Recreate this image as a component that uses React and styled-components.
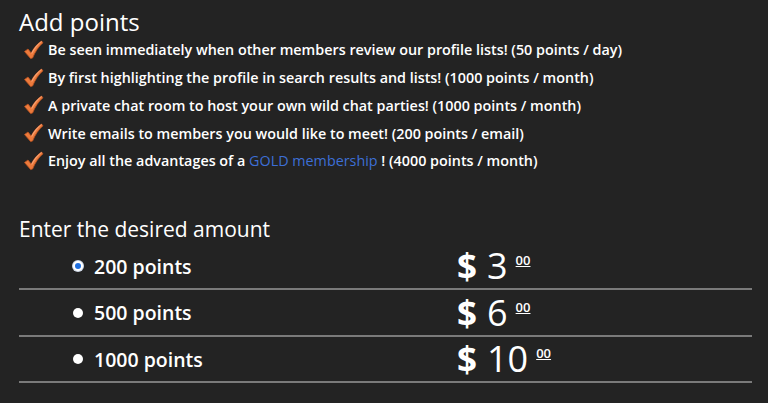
import * as React from "react";
import styled, { createGlobalStyle } from "styled-components";

const GlobalStyle = createGlobalStyle`
	html, body {
		margin: 0;
		padding: 0;
		background: #232323;
	}
	body {
		font-family: "Open Sans", "DejaVu Sans", sans-serif;
		color: #fff;
	}
`

const StyledWrapper = styled.section`
	width: 768px;
	height: 403px;
	padding: 8px 16px 0 19px;
	box-sizing: border-box;
	overflow: hidden;
`
const StyledTitle = styled.h1`
	margin: 0;
	font-size: 24px;
	font-weight: 400;
	line-height: 28px;
`
const StyledList = styled.ul`
	list-style: none;
	margin: 0;
	padding: 0 0 0 4px;
`
const StyledItem = styled.li`
	display: flex;
	align-items: center;
	gap: 4px;
	height: 27.75px;
	font-size: 14.35px;
	font-weight: 600;
`
const StyledLink = styled.a`
	color: #3d6fd6;
	font-weight: 400;
	text-decoration: none;
`
const StyledSubtitle = styled.h2`
	margin: 39px 0 0;
	font-size: 21px;
	font-weight: 400;
	line-height: 30px;
`
const StyledRow = styled.label`
	display: grid;
	grid-template-columns: 384px 1fr;
	align-items: center;
	height: 46.5px;
	padding-left: 54px;
	border-bottom: 2px solid #7a7a7a;
	box-sizing: border-box;
	width: 733px;
`
const StyledOption = styled.span`
	display: flex;
	align-items: center;
	gap: 11px;
	font-size: 19.5px;
	font-weight: 600;
`
const StyledRadio = styled.span`
	width: 10px;
	height: 10px;
	border-radius: 50%;
	box-sizing: border-box;
	background: ${p => (p.checked ? "#1f6fe0" : "#fff")};
	border: ${p => (p.checked ? "2px solid #fff" : "none")};
	box-shadow: ${p => (p.checked ? "0 0 0 1px #cfd8e6" : "none")};
`
const StyledPrice = styled.span`
	display: flex;
	align-items: flex-start;
	gap: 10px;
	font-size: 36px;
	font-weight: 400;
	line-height: 42px;
`
const StyledDollar = styled.span`
	font-weight: 700;
	font-size: 35px;
`
const StyledCents = styled.span`
	font-size: 13px;
	font-weight: 600;
	line-height: 14px;
	text-decoration: underline;
	margin: 8px 0 0 -2px;
`

const Check = () => (
	<svg width="21" height="20" viewBox="0 0 21 20">
		<path d="M1.5 11.5 L5 9 L8.2 13 C10.8 8 14 4 18.5 1 L20 2.8 C15.5 6.5 12.2 11.8 9.6 18 L7.6 18.6 Z" fill="#ec7a3c" stroke="#b9521f" strokeWidth="0.8" strokeLinejoin="round" />
		<path d="M8.2 13 C10.8 8 14 4 18.5 1 L19 1.6 C15 4.8 12 8.8 9 14 Z" fill="#f7a070" />
	</svg>
)

const perks = [
	"Be seen immediately when other members review our profile lists! (50 points / day)",
	"By first highlighting the profile in search results and lists! (1000 points / month)",
	"A private chat room to host your own wild chat parties! (1000 points / month)",
	"Write emails to members you would like to meet! (200 points / email)",
]

const options = [
	{ points: "200 points", price: "3" },
	{ points: "500 points", price: "6" },
	{ points: "1000 points", price: "10" },
]

const App = () => {
	return (
		<>
			<GlobalStyle />
			<StyledWrapper>
				<StyledTitle>Add points</StyledTitle>
				<StyledList>
					{perks.map(text => (
						<StyledItem key={text}>
							<Check />
							<span>{text}</span>
						</StyledItem>
					))}
					<StyledItem>
						<Check />
						<span>
							Enjoy all the advantages of a <StyledLink href="#">GOLD membership</StyledLink> ! (4000 points / month)
						</span>
					</StyledItem>
				</StyledList>
				<StyledSubtitle>Enter the desired amount</StyledSubtitle>
				{options.map((o, i) => (
					<StyledRow key={o.points}>
						<StyledOption>
							<StyledRadio checked={i === 0} />
							{o.points}
						</StyledOption>
						<StyledPrice>
							<StyledDollar>$</StyledDollar>
							{o.price}
							<StyledCents>00</StyledCents>
						</StyledPrice>
					</StyledRow>
				))}
			</StyledWrapper>
		</>
	);
};

export default App;
